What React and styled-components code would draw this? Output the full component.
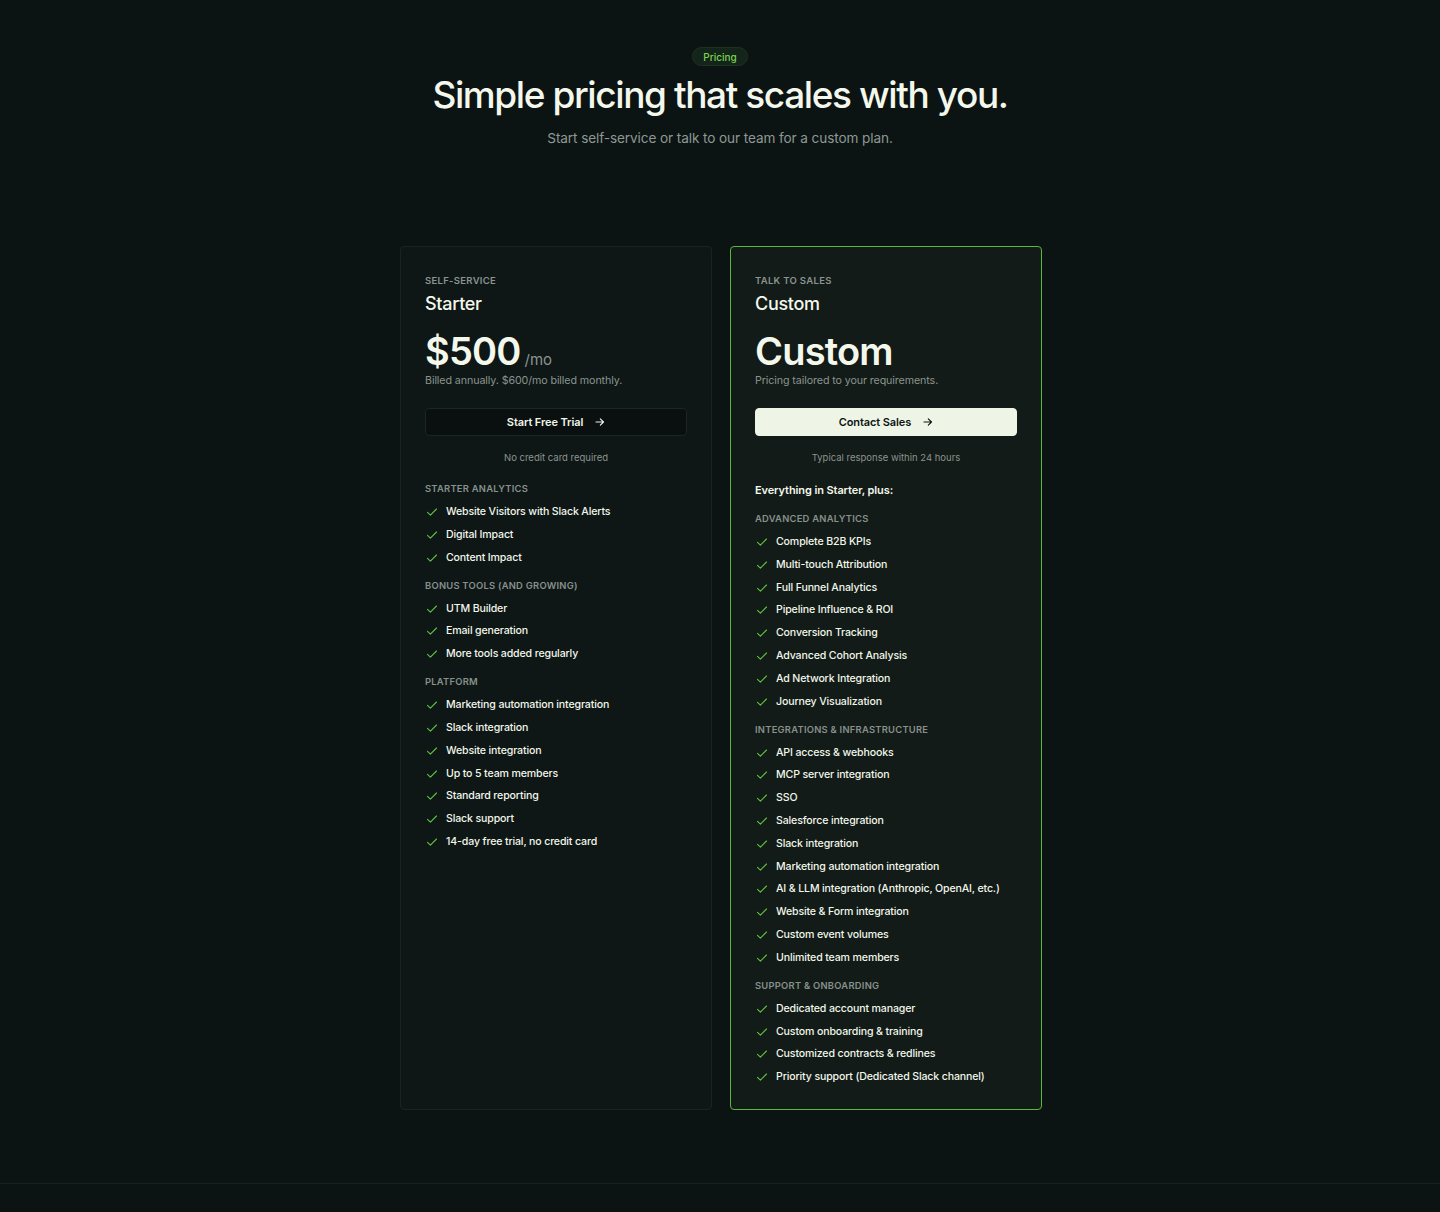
import React from "react";
import styled, { createGlobalStyle } from "styled-components";

const Global = createGlobalStyle`
  * { box-sizing: border-box; }
  html, body { margin: 0; padding: 0; }
  body {
    background: #0c1413;
    color: #f1f6ea;
    font-family: Inter, "Noto Sans", sans-serif;
    -webkit-font-smoothing: antialiased;
  }
`;

const Page = styled.div`
  min-height: 1212px;
  display: flex;
  flex-direction: column;
`;

const Section = styled.section`
  padding: 47px 0 73px;
  display: flex;
  flex-direction: column;
  align-items: center;
`;

const Pill = styled.span`
  display: inline-flex;
  align-items: center;
  height: 19px;
  padding: 0 10px;
  border-radius: 999px;
  background: #13241a;
  border: 1px solid #1d3320;
  color: #7ed24e;
  font-size: 10px;
  font-weight: 500;
`;

const Title = styled.h1`
  margin: 7px 0 0;
  font-size: 37px;
  line-height: 44px;
  font-weight: 500;
  letter-spacing: -1.4px;
  color: #f4f8ec;
`;

const Subtitle = styled.p`
  margin: 11px 0 0;
  font-size: 13.6px;
  line-height: 20px;
  color: #8e9893;
  letter-spacing: -0.1px;
`;

const Cards = styled.div`
  margin-top: 98px;
  padding-left: 2px;
  display: grid;
  grid-template-columns: 312px 312px;
  gap: 18px;
`;

const Card = styled.div`
  border-radius: 4px;
  padding: 27px 24px 24px;
  display: flex;
  flex-direction: column;
  background: ${(p) => (p.$featured ? "#121b17" : "#0e1716")};
  border: 1px solid ${(p) => (p.$featured ? "#5cb83b" : "#1a2321")};
`;

const Eyebrow = styled.div`
  font-size: 9.5px;
  line-height: 14px;
  font-weight: 600;
  letter-spacing: 0.3px;
  text-transform: uppercase;
  color: #8a948f;
`;

const PlanName = styled.div`
  margin-top: 4px;
  font-size: 18px;
  line-height: 24px;
  font-weight: 500;
  letter-spacing: -0.3px;
  color: #f4f8ec;
`;

const PriceRow = styled.div`
  margin-top: 13px;
  display: flex;
  align-items: baseline;
  gap: 4px;
`;

const Price = styled.span`
  font-size: 38px;
  line-height: 44px;
  font-weight: 600;
  letter-spacing: -0.8px;
  color: #f4f8ec;
`;

const Per = styled.span`
  font-size: 15px;
  color: #8a948f;
`;

const PriceNote = styled.div`
  font-size: 10.7px;
  line-height: 16px;
  color: #8a948f;
  letter-spacing: -0.1px;
`;

const Button = styled.button`
  margin-top: 19px;
  height: 28px;
  width: 100%;
  border-radius: 4px;
  display: flex;
  align-items: center;
  justify-content: center;
  gap: 12px;
  font-family: inherit;
  font-size: 11px;
  font-weight: 600;
  letter-spacing: -0.1px;
  cursor: pointer;
  background: ${(p) => (p.$primary ? "#eff5e6" : "#0a0f0f")};
  color: ${(p) => (p.$primary ? "#0c1413" : "#f1f6ea")};
  border: 1px solid ${(p) => (p.$primary ? "#eff5e6" : "#1c2523")};
`;

const Hint = styled.div`
  margin-top: 15px;
  text-align: center;
  font-size: 9.5px;
  line-height: 14px;
  color: #8a948f;
`;

const Lead = styled.div`
  margin-top: 17px;
  font-size: 11px;
  line-height: 16px;
  font-weight: 600;
  letter-spacing: -0.1px;
  color: #f4f8ec;
`;

const Group = styled.div`
  margin-top: ${(p) => p.$gap}px;
`;

const GroupTitle = styled.div`
  font-size: 9.4px;
  line-height: 14px;
  font-weight: 600;
  letter-spacing: 0.25px;
  text-transform: uppercase;
  color: #87918c;
`;

const List = styled.ul`
  list-style: none;
  margin: 8px 0 0;
  padding: 0;
  display: flex;
  flex-direction: column;
  gap: 6.8px;
`;

const Item = styled.li`
  display: flex;
  align-items: center;
  gap: 8px;
  font-size: 10.6px;
  line-height: 16px;
  font-weight: 500;
  letter-spacing: -0.15px;
  color: #f1f6ea;
`;

const CheckMark = styled.svg`
  width: 12px;
  height: 12px;
  flex: none;
  margin-left: 1px;
`;

const Footer = styled.footer`
  margin-top: auto;
  height: 30px;
  border-top: 1px solid #18211f;
`;

const Check = () => (
  <CheckMark viewBox="0 0 12 12" fill="none">
    <path d="M1.5 6.3 4.4 9.1 10.5 3" stroke="#62c142" strokeWidth="1.1" strokeLinecap="round" strokeLinejoin="round" />
  </CheckMark>
);

const Arrow = () => (
  <svg width="10" height="10" viewBox="0 0 10 10" fill="none">
    <path d="M1 5h7.5M5.3 1.8 8.5 5 5.3 8.2" stroke="currentColor" strokeWidth="1.1" strokeLinecap="round" strokeLinejoin="round" />
  </svg>
);

const starter = [
  ["Starter Analytics", ["Website Visitors with Slack Alerts", "Digital Impact", "Content Impact"]],
  ["Bonus Tools (and growing)", ["UTM Builder", "Email generation", "More tools added regularly"]],
  ["Platform", [
    "Marketing automation integration",
    "Slack integration",
    "Website integration",
    "Up to 5 team members",
    "Standard reporting",
    "Slack support",
    "14-day free trial, no credit card",
  ]],
];

const custom = [
  ["Advanced Analytics", [
    "Complete B2B KPIs",
    "Multi-touch Attribution",
    "Full Funnel Analytics",
    "Pipeline Influence & ROI",
    "Conversion Tracking",
    "Advanced Cohort Analysis",
    "Ad Network Integration",
    "Journey Visualization",
  ]],
  ["Integrations & Infrastructure", [
    "API access & webhooks",
    "MCP server integration",
    "SSO",
    "Salesforce integration",
    "Slack integration",
    "Marketing automation integration",
    "AI & LLM integration (Anthropic, OpenAI, etc.)",
    "Website & Form integration",
    "Custom event volumes",
    "Unlimited team members",
  ]],
  ["Support & Onboarding", [
    "Dedicated account manager",
    "Custom onboarding & training",
    "Customized contracts & redlines",
    "Priority support (Dedicated Slack channel)",
  ]],
];

const Features = ({ groups, first }) =>
  groups.map(([title, items], i) => (
    <Group key={title} $gap={i === 0 ? first : 13}>
      <GroupTitle>{title}</GroupTitle>
      <List>
        {items.map((t) => (
          <Item key={t}>
            <Check />
            {t}
          </Item>
        ))}
      </List>
    </Group>
  ));

export default function App() {
  return (
    <Page>
      <Global />
      <Section>
        <Pill>Pricing</Pill>
        <Title>Simple pricing that scales with you.</Title>
        <Subtitle>Start self-service or talk to our team for a custom plan.</Subtitle>
        <Cards>
          <Card>
            <Eyebrow>Self-service</Eyebrow>
            <PlanName>Starter</PlanName>
            <PriceRow>
              <Price>$500</Price>
              <Per>/mo</Per>
            </PriceRow>
            <PriceNote>Billed annually. $600/mo billed monthly.</PriceNote>
            <Button>
              Start Free Trial <Arrow />
            </Button>
            <Hint>No credit card required</Hint>
            <Features groups={starter} first={17} />
          </Card>
          <Card $featured>
            <Eyebrow>Talk to sales</Eyebrow>
            <PlanName>Custom</PlanName>
            <PriceRow>
              <Price>Custom</Price>
            </PriceRow>
            <PriceNote>Pricing tailored to your requirements.</PriceNote>
            <Button $primary>
              Contact Sales <Arrow />
            </Button>
            <Hint>Typical response within 24 hours</Hint>
            <Lead>Everything in Starter, plus:</Lead>
            <Features groups={custom} first={14} />
          </Card>
        </Cards>
      </Section>
      <Footer />
    </Page>
  );
}
